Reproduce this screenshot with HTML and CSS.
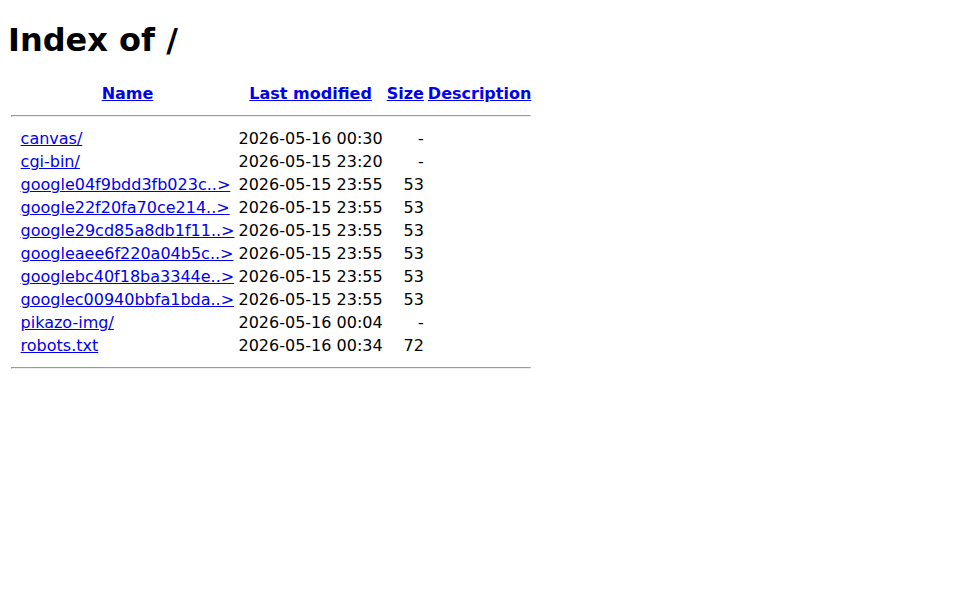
FILE: index.html
```html
<!DOCTYPE html>
<html>
<head>
<title>Index of /</title>
<link rel="stylesheet" href="styles.css">
</head>
<body>
<h1 class="title">Index of /</h1>
<table class="listing">
<tr><th class="icon">&nbsp;</th><th><a href="#">Name</a></th><th><a href="#">Last modified</a></th><th><a href="#">Size</a></th><th><a href="#">Description</a></th></tr>
<tr><th colspan="5"><hr class="rule"></th></tr>
<tr><td class="icon">&nbsp;</td><td><a href="#">canvas/</a></td><td class="right">2026-05-16 00:30  </td><td class="right">  - </td><td>&nbsp;</td></tr>
<tr><td class="icon">&nbsp;</td><td><a href="#">cgi-bin/</a></td><td class="right">2026-05-15 23:20  </td><td class="right">  - </td><td>&nbsp;</td></tr>
<tr><td class="icon">&nbsp;</td><td><a href="#">google04f9bdd3fb023c..&gt;</a></td><td class="right">2026-05-15 23:55  </td><td class="right"> 53 </td><td>&nbsp;</td></tr>
<tr><td class="icon">&nbsp;</td><td><a href="#">google22f20fa70ce214..&gt;</a></td><td class="right">2026-05-15 23:55  </td><td class="right"> 53 </td><td>&nbsp;</td></tr>
<tr><td class="icon">&nbsp;</td><td><a href="#">google29cd85a8db1f11..&gt;</a></td><td class="right">2026-05-15 23:55  </td><td class="right"> 53 </td><td>&nbsp;</td></tr>
<tr><td class="icon">&nbsp;</td><td><a href="#">googleaee6f220a04b5c..&gt;</a></td><td class="right">2026-05-15 23:55  </td><td class="right"> 53 </td><td>&nbsp;</td></tr>
<tr><td class="icon">&nbsp;</td><td><a href="#">googlebc40f18ba3344e..&gt;</a></td><td class="right">2026-05-15 23:55  </td><td class="right"> 53 </td><td>&nbsp;</td></tr>
<tr><td class="icon">&nbsp;</td><td><a href="#">googlec00940bbfa1bda..&gt;</a></td><td class="right">2026-05-15 23:55  </td><td class="right"> 53 </td><td>&nbsp;</td></tr>
<tr><td class="icon">&nbsp;</td><td><a href="#">pikazo-img/</a></td><td class="right">2026-05-16 00:04  </td><td class="right">  - </td><td>&nbsp;</td></tr>
<tr><td class="icon">&nbsp;</td><td><a href="#">robots.txt</a></td><td class="right">2026-05-16 00:34  </td><td class="right"> 72 </td><td>&nbsp;</td></tr>
<tr><th colspan="5"><hr class="rule"></th></tr>
</table>
</body>
</html>
```
FILE: styles.css
```css
body {
  font-family: "DejaVu Sans", sans-serif;
  font-size: 16px;
  color: #000;
  background: #fff;
}
.title {
  font-size: 2em;
  font-weight: bold;
  margin: 13.44px 0 21.44px;
}
.listing td {
  vertical-align: top;
}
.listing .right {
  text-align: right;
}
.listing a {
  color: #0000ee;
}
.rule {
  margin: 8px 0;
}
```
